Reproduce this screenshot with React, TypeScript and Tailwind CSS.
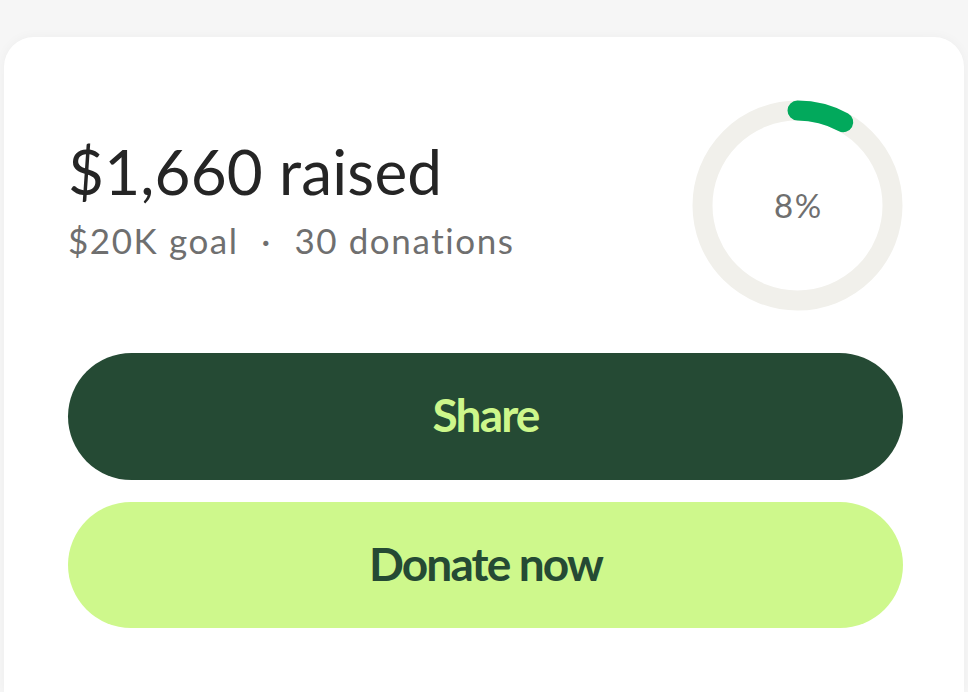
export default function App() {
  const pct = 8;
  const r = 95;
  const c = 2 * Math.PI * r;

  return (
    <div className="h-screen overflow-hidden bg-[#f6f6f6] pt-[37px] pl-[4px] pr-[4px] font-['Lato',sans-serif]">
      <div className="h-[655px] rounded-t-[30px] bg-white pl-[64px] pr-[61px] pt-[63px] shadow-[0_0_12px_rgba(0,0,0,0.04)]">
        <div className="flex items-center justify-between">
          <div className="mb-[12px] flex flex-col">
            <h1 className="text-[62px] leading-[1.1] font-normal tracking-[0.003em] text-[#252525]">$1,660 raised</h1>
            <p className="mt-[14px] text-[35px] leading-tight tracking-[0.045em] text-[#6f6f6f]">
              $20K goal <span className="mx-[12px]">·</span> 30 donations
            </p>
          </div>
          <div className="relative h-[211px] w-[211px]">
            <svg viewBox="0 0 211 211" className="h-full w-full -rotate-90">
              <circle cx="105.5" cy="105.5" r={r} fill="none" stroke="#f1f0eb" strokeWidth="20" />
              <circle
                cx="105.5"
                cy="105.5"
                r={r}
                fill="none"
                stroke="#02a95c"
                strokeWidth="20"
                strokeLinecap="round"
                strokeDasharray={`${(c * pct) / 100} ${c}`}
              />
            </svg>
            <div className="absolute inset-0 flex items-center justify-center pl-[2px] text-[33px] tracking-[0.05em] text-[#6f6f6f]">
              {pct}%
            </div>
          </div>
        </div>

        <div className="mt-[42px] flex flex-col gap-[22px]">
          <button className="flex h-[127px] items-center justify-center rounded-full bg-[#254a34] pb-[4px] text-[46px] font-bold tracking-[-0.04em] text-[#cdf78b]">
            Share
          </button>
          <button className="flex h-[126px] items-center justify-center rounded-full bg-[#cef88c] pb-[4px] text-[46px] font-bold tracking-[-0.04em] text-[#254a34]">
            Donate now
          </button>
        </div>
      </div>
    </div>
  );
}
